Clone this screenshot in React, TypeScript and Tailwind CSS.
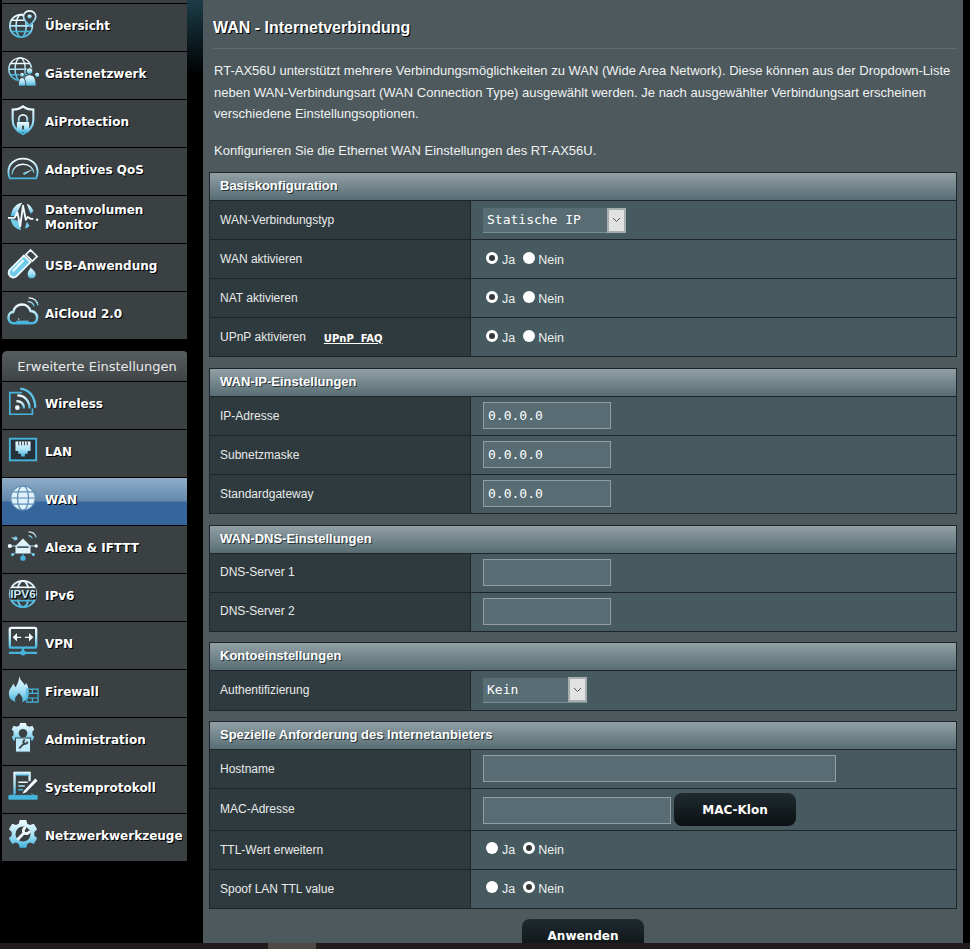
import React from "react";

const G = ({ id }: { id: string }) => (
  <defs>
    <linearGradient id={id} x1="0" y1="0" x2="0" y2="1">
      <stop offset="0" stopColor="#f2fbff" />
      <stop offset="0.55" stopColor="#a5e0f5" />
      <stop offset="1" stopColor="#45b5dc" />
    </linearGradient>
  </defs>
);

const Svg = ({ id, children }: { id: string; children: (c: string) => React.ReactNode }) => (
  <svg width="32" height="32" viewBox="0 0 34 34" fill="none" className="-mt-[3px] shrink-0">
    <G id={id} />
    {children(`url(#${id})`)}
  </svg>
);

const GlobeLines = ({ c, cx, cy, r, w = 1.5 }: { c: string; cx: number; cy: number; r: number; w?: number }) => (
  <g stroke={c} strokeWidth={w} fill="none">
    <circle cx={cx} cy={cy} r={r} />
    <ellipse cx={cx} cy={cy} rx={r * 0.45} ry={r} />
    <path d={`M${cx - r} ${cy}H${cx + r}M${cx - r * 0.85} ${cy - r * 0.5}H${cx + r * 0.85}M${cx - r * 0.85} ${cy + r * 0.5}H${cx + r * 0.85}`} />
  </g>
);

const icons: Record<string, React.ReactNode> = {
  overview: (
    <Svg id="i1">
      {(c) => (
        <>
          <GlobeLines c={c} cx={15} cy={19} r={12} w={1.7} />
          <path d="M24 3c-4 0-6.500 3-6.500 6 0 4 6.500 9.500 6.500 9.500s6.500-5.500 6.500-9.500c0-3-2.500-6-6.500-6z" fill="#3b4043" stroke={c} strokeWidth="1.8" />
          <circle cx="24" cy="9" r="2.200" fill={c} />
        </>
      )}
    </Svg>
  ),
  guest: (
    <Svg id="i2">
      {(c) => (
        <>
          <GlobeLines c={c} cx={14} cy={14} r={12} w={1.5} />
          <circle cx="24" cy="16" r="3.500" fill={c} stroke="#3b4043" />
          <path d="M17 32c0-9 3-12 7-12s7 3 7 12z" fill={c} stroke="#3b4043" />
          <circle cx="16" cy="20" r="2.600" fill={c} stroke="#3b4043" />
          <path d="M12 32c0-6 1.500-9 4-9s4 3 4 9z" fill={c} stroke="#3b4043" />
          <circle cx="32" cy="20" r="2.200" fill={c} />
        </>
      )}
    </Svg>
  ),
  protect: (
    <Svg id="i3">
      {(c) => (
        <>
          <path d="M17 2.500c3 2.500 7 3.500 11 3.500v11c0 7-5 12-11 15-6-3-11-8-11-15V6c4 0 8-1 11-3.500z" stroke={c} strokeWidth="2.200" />
          <path d="M12.500 20v-4a4.500 4.500 0 0 1 9 0v4" stroke={c} strokeWidth="2" />
          <rect x="10.500" y="19" width="13" height="11" rx="1" fill={c} />
          <rect x="16" y="23" width="2" height="4" fill="#3b4043" />
        </>
      )}
    </Svg>
  ),
  qos: (
    <Svg id="i4">
      {(c) => (
        <>
          <path d="M3 28c-1-2-1.500-4-1.500-7C1.500 12.500 8.500 7 17 7s15.500 5.500 15.500 14c0 3-.5 5-1.500 7z" stroke={c} strokeWidth="2" />
          <path d="M2 29.500h30" stroke={c} strokeWidth="2" />
          <path d="M5.500 24c0-6.500 5-11 11.500-11s11 4 11.500 9" stroke={c} strokeWidth="1.400" />
          <path d="M28 18l-9.500 6.500-2-1.800z" fill={c} />
        </>
      )}
    </Svg>
  ),
  traffic: (
    <Svg id="i5">
      {(c) => (
        <>
          <path d="M16 3C9 4 5 10 4 17h5l1.500-3z" fill={c} />
          <path d="M21 4c3 1 6 4 7 8l-3 3z" fill={c} />
          <path d="M4 20c0 6 5 11 11 12l-3-10z" fill="#6fcbe9" />
          <path d="M19 30c2 0 4-1 5-3l-3-4z" fill="#6fcbe9" />
          <path d="M1 19h7l3-6 3 15 3-22 3 15 2-3 3 2h3" stroke="#f2fbff" strokeWidth="2" strokeLinejoin="round" />
          <circle cx="32" cy="21" r="1.300" fill="#f2fbff" />
        </>
      )}
    </Svg>
  ),
  usb: (
    <Svg id="i6">
      {(c) => (
        <>
          <path d="M3 23L18 8l7 7L10 30c-2.500 2-5 1.500-7-.5-1.500-2-1.500-4.500 0-6.500z" stroke="#eaf8fd" strokeWidth="2" fill="#6fcbe9" />
          <path d="M20 7l5-5 7 7-5 5z" stroke="#eaf8fd" strokeWidth="1.800" />
          <path d="M25.500 6.500h.1M28 9h.1" stroke="#eaf8fd" strokeWidth="2" />
          <path d="M7 24L17 13.500" stroke="#eaf8fd" strokeWidth="2.400" strokeLinecap="round" />
          <path d="M25 20c2 3 6 4.500 6 8a4.800 4.800 0 0 1-9.600 0c0-3.500 2.600-5 3.600-8z" fill={c} stroke="#3b4043" />
        </>
      )}
    </Svg>
  ),
  cloud: (
    <Svg id="i7">
      {(c) => (
        <>
          <path d="M7 29C3.500 29 1.500 26 1.500 23c0-3 2-6 5-6 1-5 5-8 9.500-8s8 3 9 7c4 0 7 3 7 7s-3 6-7 6z" stroke={c} strokeWidth="2.600" />
          <path d="M10 27h13M12 24.500h1" stroke={c} strokeWidth="1.500" />
          <path d="M22 6c3 0 6 2 7 5M23 2c5 0 9 3 10 8" stroke={c} strokeWidth="1.500" />
        </>
      )}
    </Svg>
  ),
  wireless: (
    <Svg id="i8">
      {(c) => (
        <>
          <path d="M16 7H3v23h24v-6" stroke="#45b5dc" strokeWidth="1.800" />
          <circle cx="11" cy="23" r="2.500" fill="#f2fbff" />
          <path d="M10 16c5 0 8 3 8 8" stroke={c} strokeWidth="2.400" />
          <path d="M11 10c8 0 13 6 13 14" stroke={c} strokeWidth="2.400" />
          <path d="M14 3c9 0 16 8 16 20" stroke="#5cc6e8" strokeWidth="2.400" />
        </>
      )}
    </Svg>
  ),
  lan: (
    <Svg id="i9">
      {(c) => (
        <>
          <rect x="3" y="5" width="28" height="23" stroke="#45b5dc" strokeWidth="2" fill="#243138" />
          <path d="M9 8h16v10h-3v3h-3v3h-4v-3h-3v-3H9z" fill={c} />
          <path d="M12.500 8v4M15.500 8v4M18.500 8v4M21.500 8v4" stroke="#243138" />
        </>
      )}
    </Svg>
  ),
  wan: (
    <Svg id="i10">
      {() => (
        <>
          <circle cx="17" cy="17" r="13" fill="#dff1fa" />
          <GlobeLines c="#5f8db5" cx={17} cy={17} r={13} w={1.3} />
        </>
      )}
    </Svg>
  ),
  alexa: (
    <Svg id="i11">
      {(c) => (
        <>
          <path d="M9 17l8-8 8 8v8H9z" fill="#dff3fb" />
          <rect x="11" y="17" width="12" height="2" fill="#3b4043" />
          <path d="M3 17h28M9 10L5 8M9 24l-4 3M25 24l4 3M17 25v3" stroke={c} strokeWidth="1" />
          <circle cx="3" cy="17" r="2.200" fill="#f2fbff" />
          <circle cx="31" cy="17" r="1.800" fill="#f2fbff" />
          <circle cx="9" cy="9" r="2.200" fill="#7ccbe8" />
          <circle cx="6" cy="26" r="1.600" fill="#7ccbe8" />
          <circle cx="28" cy="26" r="1.600" fill="#7ccbe8" />
          <circle cx="17" cy="30" r="2.800" fill="#45b5dc" />
          <path d="M23 6c2 0 3 1 4 3M23 2c4 0 7 2 8 6" stroke={c} strokeWidth="1.200" />
        </>
      )}
    </Svg>
  ),
  ipv6: (
    <Svg id="i12">
      {(c) => (
        <>
          <GlobeLines c={c} cx={17} cy={17} r={14} w={2} />
          <rect x="3" y="11" width="28" height="12" fill="#3b4043" />
          <text x="17" y="21.500" textAnchor="middle" fontFamily="'Liberation Sans'" fontWeight="700" fontSize="12" fill="#c9ecf9" textLength="27" lengthAdjust="spacingAndGlyphs">IPV6</text>
        </>
      )}
    </Svg>
  ),
  vpn: (
    <Svg id="i13">
      {(c) => (
        <>
          <rect x="3" y="2" width="28" height="21" rx="1.500" stroke={c} strokeWidth="2.500" />
          <path d="M7 12h8M7 12l3-3v6zM27 12h-8M27 12l-3-3v6z" stroke="#f2fbff" strokeWidth="1.300" fill="#f2fbff" />
          <path d="M17 23v5M2 28.500h30" stroke="#45b5dc" strokeWidth="2.500" />
          <circle cx="17" cy="28.500" r="2.800" fill="#45b5dc" />
        </>
      )}
    </Svg>
  ),
  firewall: (
    <Svg id="i14">
      {(c) => (
        <>
          <path d="M13 2c1 5 4 6 6 10 1-1 1-2 1-3 3 4 3 8 3 12 0 6-4 9-10 9S2 27 2 21c0-5 3-7 5-11 1 2 1 3 2 4 2-3 4-7 4-12z" fill={c} />
          <path d="M12.500 20c2 3 4 4 4 7a4 4 0 0 1-8 0c0-3 3-4 4-7z" fill="#3b4043" />
          <path d="M21 16h12v14H21zM21 20.500h12M21 25.500h12M27 16v4.500M27 25.500V30" stroke="#45b5dc" strokeWidth="1.300" />
        </>
      )}
    </Svg>
  ),
  admin: (
    <Svg id="i15">
      {(c) => (
        <>
          <path d="M14 1h6l1 3 3 1 3-1 2 4-2 2v4l2 2-2 4-3-1-3 1-1 2h-6l-1-2-3-1-3 1-2-4 2-2v-4L5 8l2-4 3 1 3-1z" fill={c} />
          <circle cx="17" cy="12" r="4.500" fill="#3b4043" />
          <rect x="9" y="17" width="16" height="15" fill="#bfeafa" stroke="#3b4043" />
          <path d="M13 28l6-6M19 19c-2 1-2 3-1 4 2 1 3 0 4-2" stroke="#3b4043" strokeWidth="2" />
        </>
      )}
    </Svg>
  ),
  log: (
    <Svg id="i16">
      {(c) => (
        <>
          <path d="M8 26V3h16v9" stroke={c} strokeWidth="2.500" />
          <path d="M9 2h15v4H9z" fill={c} />
          <path d="M12 13h10M12 17h7M12 21h5" stroke={c} strokeWidth="1.600" />
          <path d="M18 22l12-13 2.500 2.500L20 24l-3.500 1z" fill="#f2fbff" />
          <path d="M2 27h30v4H2zM8 25l-4 3M26 25l4 3" fill="#45b5dc" stroke="#45b5dc" />
        </>
      )}
    </Svg>
  ),
  tools: (
    <Svg id="i17">
      {(c) => (
        <>
          <path d="M13.500 2h7l1 4 3 1.500 4-1.500 3.500 6-3 3v3.500l3 3-3.500 6-4-1.500-3 1.500-1 4h-7l-1-4-3-1.500-4 1.500-3.500-6 3-3V15L2 12l3.500-6 4 1.500 3-1.500z" fill={c} />
          <circle cx="17" cy="17" r="8" fill="#3b4043" />
          <path d="M11 23l7-7M20 10c-3 1-3 4-2 6 2 1 5 1 6-2" stroke="#f2fbff" strokeWidth="3" />
        </>
      )}
    </Svg>
  ),
};

const Item = ({ icon, label, active }: { icon: string; label: React.ReactNode; active?: boolean }) => (
  <div
    className={
      "flex h-[47px] items-center gap-[6px] pb-[4px] pl-[5px] font-['DejaVu_Sans',sans-serif] text-[12px] leading-[15px] font-bold text-white [text-shadow:1px_1px_0_#000] " +
      (active
        ? "bg-[linear-gradient(to_bottom,#8fadc8_0%,#6489ac_48%,#35659a_52%,#35659a_100%)]"
        : "bg-[#3b4043]")
    }
  >
    {icons[icon]}
    <span className={typeof label === "string" ? "mt-[2px]" : ""}>{label}</span>
  </div>
);

const Rows = ({ items }: { items: { icon: string; label: React.ReactNode; active?: boolean }[] }) => (
  <div className="flex flex-col gap-px">
    {items.map((it) => (
      <Item key={it.icon} {...it} />
    ))}
  </div>
);

const Section = ({ title, className, children }: { title: string; className?: string; children: React.ReactNode }) => (
  <div className={"border-t border-r border-l border-[#1d2528] " + (className ?? "")}>
    <div className="flex h-[28px] items-center border-b border-[#1d2528] bg-[linear-gradient(to_bottom,#92a0a5_0%,#576d73_100%)] pb-[2px] pl-[10px] text-[13px] font-bold text-white [text-shadow:1px_1px_0_#2a3336]">
      {title}
    </div>
    {children}
  </div>
);

const Row = ({ label, extra, h, up, children }: { label: string; extra?: React.ReactNode; h?: string; up?: boolean; children: React.ReactNode }) => (
  <div className={"flex border-b border-[#1d2528] " + (h ?? "h-[39px]")}>
    <div className={"flex w-[261px] shrink-0 items-center gap-[18px] border-r border-[#1d2528] bg-[#2f3a3e] pl-[10px] text-[12px] text-[#e8eaea] " + (up ? "pb-[2px]" : "")}>
      <span>{label}</span>
      {extra}
    </div>
    <div className="flex flex-1 items-center bg-[#475a5f] pl-[12px]">{children}</div>
  </div>
);

const Dot = ({ on }: { on?: boolean }) => (
  <span
    className={
      "inline-block h-[12px] w-[12px] rounded-full border-white " +
      (on ? "border-[3px] bg-[#35393b]" : "bg-white")
    }
  />
);

const Radio = ({ yes, className }: { yes: boolean; className?: string }) => (
  <div className={"flex items-center pl-[3px] text-[12.500px] text-[#eef0f0] " + (className ?? "")}>
    <span className="-mt-[3px] flex"><Dot on={yes} /></span>
    <span className="mt-[2px] ml-[4px]">Ja</span>
    <span className="-mt-[3px] ml-[8px] flex"><Dot on={!yes} /></span>
    <span className="mt-[2px] ml-[3px]">Nein</span>
  </div>
);

const Input = ({ value, w, className }: { value?: string; w: string; className?: string }) => (
  <div className={"flex h-[27px] items-center border border-[#929ea1] bg-[#576d73] pt-[1px] pl-[4px] font-['DejaVu_Sans_Mono',monospace] text-[13px] text-white " + w + " " + (className ?? "-mt-[1px]")}>
    {value}
  </div>
);

const Select = ({ value, w, className }: { value: string; w: string; className?: string }) => (
  <div className={"flex h-[25px] items-center border-b border-[#788e94] bg-[#576d73] pl-[4px] font-['DejaVu_Sans_Mono',monospace] text-[13px] text-white " + w + " " + (className ?? "mt-[1px]")}>
    <span className="flex-1">{value}</span>
    <span className="flex h-[25px] w-[19px] items-center justify-center border-2 border-[#a7aeb0] bg-[#e2e2e2]">
      <svg width="9" height="6" viewBox="0 0 9 6" fill="none">
        <path d="M1 1l3.500 3.500L8 1" stroke="#555" strokeWidth="1" />
      </svg>
    </span>
  </div>
);

const Btn = ({ children, className }: { children: React.ReactNode; className?: string }) => (
  <div className={"flex w-[122px] shrink-0 items-center justify-center rounded-[8px] bg-[linear-gradient(to_bottom,#1f2b30_0%,#0c1012_100%)] font-['DejaVu_Sans',sans-serif] text-[12px] font-bold text-white " + (className ?? "")}>
    {children}
  </div>
);

export default function App() {
  return (
    <div className="flex h-[949px] w-[970px] flex-col overflow-hidden bg-black font-['Liberation_Sans',Arial,sans-serif]">
      <div className="flex h-[943px] shrink-0">
        <aside className="w-[187px] shrink-0 pl-[2px]">
          <div className="h-[3px] bg-[#3b4043]" />
          <div className="mt-px">
            <Rows
              items={[
                { icon: "overview", label: "Übersicht" },
                { icon: "guest", label: "Gästenetzwerk" },
                { icon: "protect", label: "AiProtection" },
                { icon: "qos", label: "Adaptives QoS" },
                { icon: "traffic", label: (<>Datenvolumen<br />Monitor</>) },
                { icon: "usb", label: "USB-Anwendung" },
                { icon: "cloud", label: "AiCloud 2.0" },
              ]}
            />
          </div>
          <div className="mt-[12px] -mr-px flex h-[30px] items-center justify-center rounded-t-[5px] bg-[linear-gradient(to_bottom,#575c5f_0%,#3f4447_100%)] pt-[2px] font-['DejaVu_Sans',sans-serif] text-[13px] text-[#e8eaea]">
            <span className="pl-[4px]">Erweiterte Einstellungen</span>
          </div>
          <div className="mt-px">
            <Rows
              items={[
                { icon: "wireless", label: "Wireless" },
                { icon: "lan", label: "LAN" },
                { icon: "wan", label: "WAN", active: true },
                { icon: "alexa", label: "Alexa & IFTTT" },
                { icon: "ipv6", label: "IPv6" },
                { icon: "vpn", label: "VPN" },
                { icon: "firewall", label: "Firewall" },
                { icon: "admin", label: "Administration" },
                { icon: "log", label: "Systemprotokoll" },
                { icon: "tools", label: "Netzwerkwerkzeuge" },
              ]}
            />
          </div>
        </aside>
        <div className="h-full w-[16px] shrink-0 bg-[linear-gradient(to_bottom,#1c3c48_0px,#000_75px)]" />
        <main className="w-[760px] shrink-0 overflow-hidden bg-[#4d595d] px-[6px]">
          <h1 className="ml-[4px] flex h-[49px] items-center border-b border-[#606c70] pt-[7px] text-[16px] font-bold text-white [text-shadow:1px_1px_0_#000]">
            WAN - Internetverbindung
          </h1>
          <div className="mt-[11px] ml-[5px] text-[13px] leading-[21.500px] text-[#f0f2f2]">
            <p>
              RT-AX56U unterstützt mehrere Verbindungsmöglichkeiten zu WAN (Wide Area Network). Diese können aus der Dropdown-Liste
              <br />
              neben WAN-Verbindungsart (WAN Connection Type) ausgewählt werden. Je nach ausgewählter Verbindungsart erscheinen
              <br />
              verschiedene Einstellungsoptionen.
            </p>
            <p className="mt-[15px]">Konfigurieren Sie die Ethernet WAN Einstellungen des RT-AX56U.</p>
          </div>
          <Section title="Basiskonfiguration" className="mt-[11px]">
            <Row label="WAN-Verbindungstyp"><Select value="Statische IP" w="w-[143px]" /></Row>
            <Row label="WAN aktivieren"><Radio yes /></Row>
            <Row label="NAT aktivieren"><Radio yes /></Row>
            <Row
              label="UPnP aktivieren"
              extra={<span className="mt-[2px] font-['DejaVu_Sans',sans-serif] text-[10px] font-bold text-white underline">UPnP&nbsp; FAQ</span>}
            >
              <Radio yes />
            </Row>
          </Section>
          <Section title="WAN-IP-Einstellungen" className="mt-[11px]">
            <Row label="IP-Adresse"><Input value="0.0.0.0" w="w-[128px]" /></Row>
            <Row label="Subnetzmaske"><Input value="0.0.0.0" w="w-[128px]" /></Row>
            <Row label="Standardgateway"><Input value="0.0.0.0" w="w-[128px]" /></Row>
          </Section>
          <Section title="WAN-DNS-Einstellungen" className="mt-[11px]">
            <Row label="DNS-Server 1" up><Input w="w-[128px]" /></Row>
            <Row label="DNS-Server 2" up><Input w="w-[128px]" /></Row>
          </Section>
          <Section title="Kontoeinstellungen" className="mt-[10px]">
            <Row label="Authentifizierung" h="h-[40px]" up><Select value="Kein" w="w-[104px]" className="-mt-[1px]" /></Row>
          </Section>
          <Section title="Spezielle Anforderung des Internetanbieters" className="mt-[10px]">
            <Row label="Hostname"><Input w="w-[353px]" /></Row>
            <Row label="MAC-Adresse" h="h-[42px]" up>
              <Input w="w-[188px]" className="mt-[2px]" />
              <Btn className="ml-[3px] h-[33px]">MAC-Klon</Btn>
            </Row>
            <Row label="TTL-Wert erweitern"><Radio yes={false} className="-mt-[2px]" /></Row>
            <Row label="Spoof LAN TTL value"><Radio yes={false} className="-mt-[2px]" /></Row>
          </Section>
          <Btn className="mt-[10px] ml-[313px] h-[33px] rounded-b-none">Anwenden</Btn>
        </main>
        <div className="flex-1 bg-black" />
      </div>
      <div className="flex h-[6px] shrink-0 bg-[#211c1b]">
        <div className="ml-[268px] h-full w-[48px] bg-[#4d4745]" />
      </div>
    </div>
  );
}
